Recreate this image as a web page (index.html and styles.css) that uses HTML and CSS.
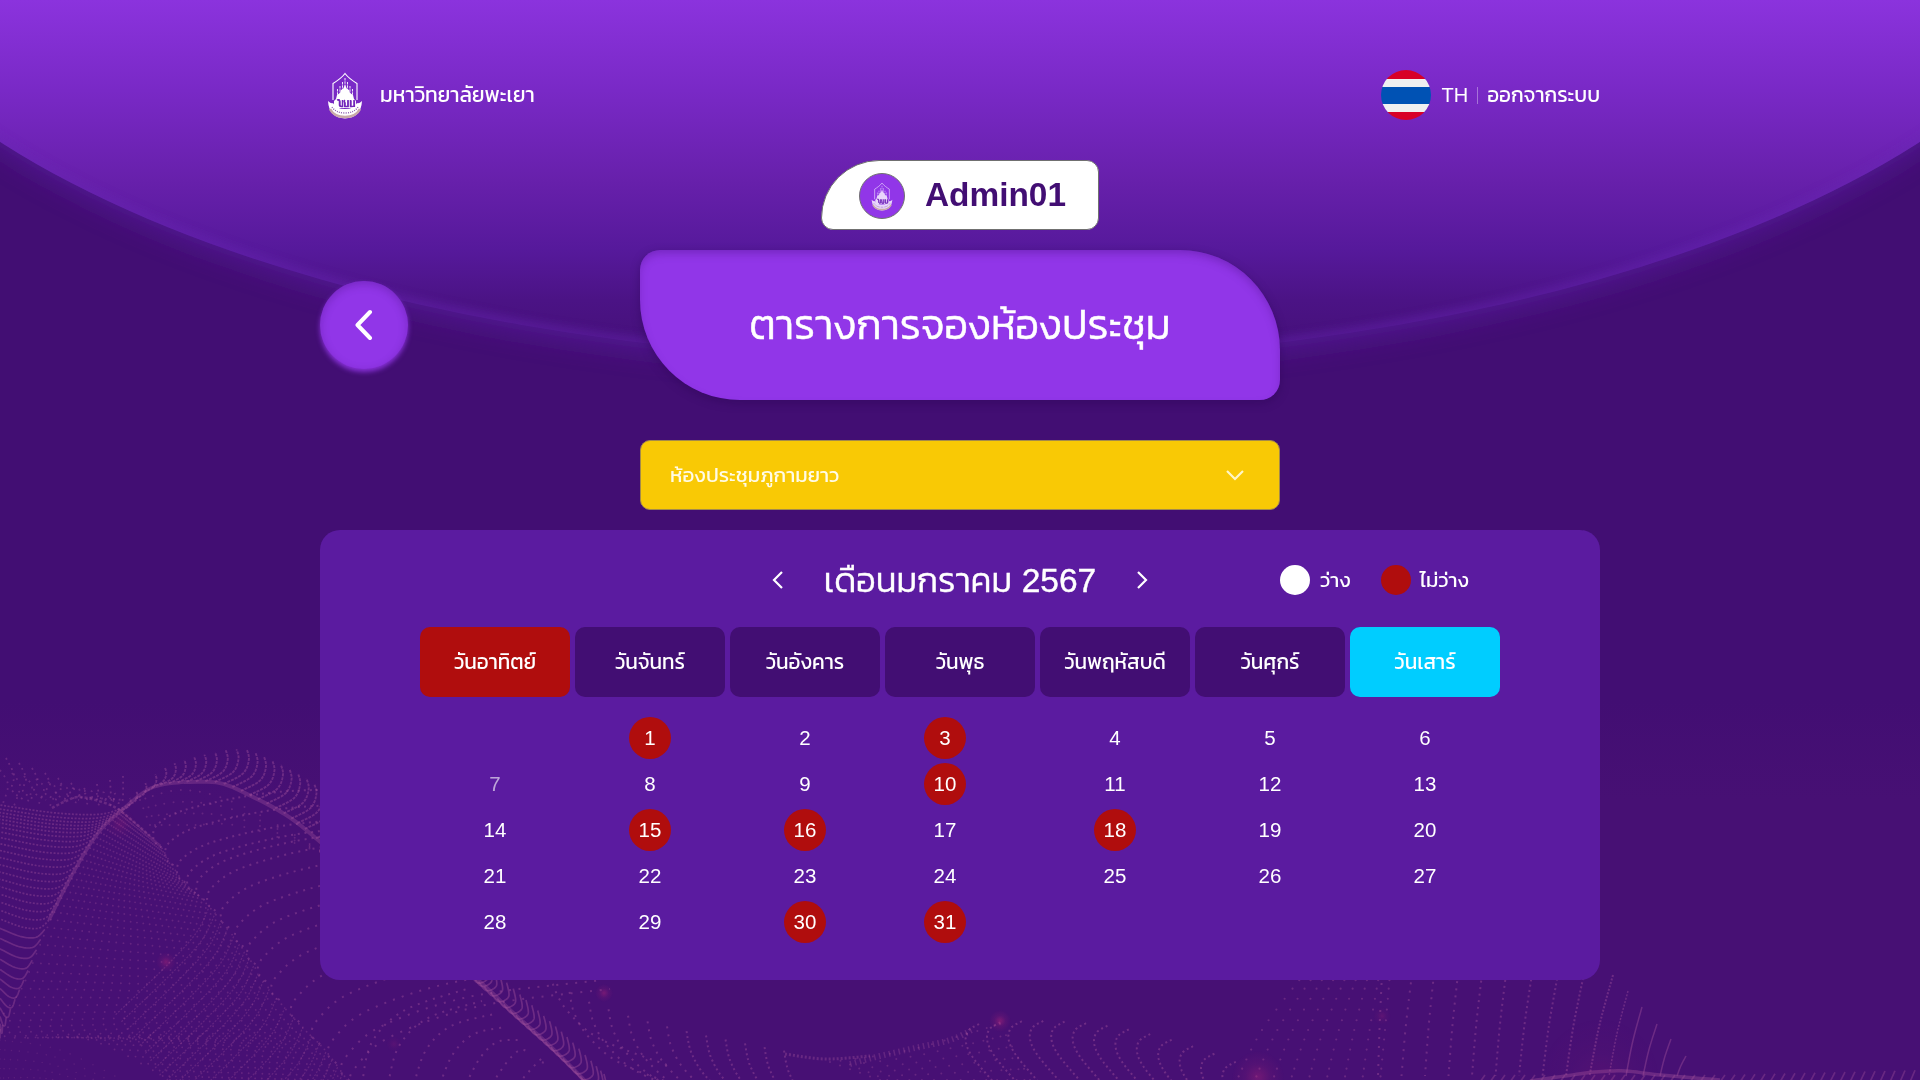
FILE: index.html
```html
<!DOCTYPE html>
<html lang="th">
<head>
<meta charset="utf-8">
<title>ตารางการจองห้องประชุม</title>
<link rel="stylesheet" href="styles.css">
</head>
<body>
<canvas class="waves" width="1920" height="360"></canvas>
<svg class="dome" width="1920" height="440" viewBox="0 0 1920 440">
  <defs>
    <linearGradient id="domeFill" gradientUnits="userSpaceOnUse" x1="0" y1="0" x2="0" y2="362">
      <stop offset="0" stop-color="#8b33dd"/><stop offset=".25" stop-color="#7929c6"/><stop offset=".5" stop-color="#6720ab"/>
      <stop offset=".69" stop-color="#56199b"/><stop offset=".83" stop-color="#4b1385"/><stop offset="1" stop-color="#430f76"/>
    </linearGradient>
    <filter id="soft" filterUnits="userSpaceOnUse" x="-100" y="-100" width="2120" height="600"><feGaussianBlur stdDeviation="14"/></filter>
    <filter id="rim" filterUnits="userSpaceOnUse" x="-100" y="-100" width="2120" height="600"><feGaussianBlur stdDeviation="5"/></filter>
    <clipPath id="domeClip"><ellipse cx="960" cy="-128" rx="1150" ry="490"/></clipPath>
  </defs>
  <ellipse cx="960" cy="-123" rx="1150" ry="490" fill="#5a1ca3" opacity=".75" filter="url(#soft)"/>
  <ellipse cx="960" cy="-128" rx="1150" ry="490" fill="url(#domeFill)"/>
  <ellipse cx="960" cy="-128" rx="1150" ry="490" fill="none" stroke="#6a28b6" stroke-width="10" opacity=".5" filter="url(#rim)" clip-path="url(#domeClip)"/>
</svg>
<svg class="defs" width="0" height="0">
  <symbol id="crest" viewBox="0 0 36 47">
    <path d="M6 28V11.500C10 9 15 5.500 18 1.500c3 4 8 7.500 12 10V28" fill="none" stroke="currentColor" stroke-width="1.100"/>
    <path d="M18 6v12M15.500 10v10M20.500 10v10M13 14v9M23 14v9M10.500 17v9M25.500 17v9" stroke="currentColor" stroke-width=".9" stroke-dasharray="2.500 .8"/>
    <path d="M18 13l2 4 2 1 1 3 3 2 1 4 2 2v7H7v-7l2-2 1-4 3-2 1-3 2-1z" fill="currentColor"/>
    <path class="crest-mono" d="M10 28q2.500-1 2.500 1v4q0 1.500 2 1.500h1V28m2.500 0q-1.500 1 0 3v3.500h3V28m2.500 0v6.500H27V28" fill="none" stroke-width="1.500"/>
    <path d="M1 29q3 3 5 2 3 6 12 6t12-6q2 1 5-2-1 17-17 17.500Q2 46 1 29z" fill="currentColor"/>
    <path class="crest-ribbon" d="M3 37q4 8 15 8t15-8" fill="none" stroke-width="2.600"/>
    <path d="M5 35q4 6 13 6t13-6" fill="none" stroke="#8a5bb0" stroke-width="1.300" stroke-dasharray="1 1.200"/>
    <path class="crest-mono" d="M11 28.500q2-1 2 1v3.500q0 1.500 2 1.500M17.500 28.500v6h3.500v-6M24 28.500v6h3.500v-6" fill="none" stroke-width="1.200"/>
  </symbol>
</svg>
<div class="page">
  <header class="topbar">
    <div class="brand"><svg class="brand-crest"><use href="#crest"/></svg><span>มหาวิทยาลัยพะเยา</span></div>
    <div class="account">
      <span class="flag"></span><span class="lang">TH</span><span class="divider"></span><span class="logout">ออกจากระบบ</span>
    </div>
  </header>
  <div class="user"><span class="avatar"><svg><use href="#crest"/></svg></span><b>Admin01</b></div>
  <div class="hero">
    <button class="back" aria-label="back"><svg width="18" height="32" viewBox="0 0 18 32"><path d="M15 3L2.500 16 15 29" fill="none" stroke="#fff" stroke-width="4" stroke-linecap="round" stroke-linejoin="round"/></svg></button>
    <h1>ตารางการจองห้องประชุม</h1>
  </div>
  <div class="select"><span>ห้องประชุมภูกามยาว</span><svg width="20" height="12" viewBox="0 0 20 12"><path d="M2 2l8 8 8-8" fill="none" stroke="#fff6c8" stroke-width="2.200"/></svg></div>
  <section class="calendar">
    <div class="month-bar">
      <div class="month">
        <svg width="12" height="20" viewBox="0 0 12 20"><path d="M10 2l-8 8 8 8" fill="none" stroke="#fff" stroke-width="2.200"/></svg>
        <h2>เดือนมกราคม <span>2567</span></h2>
        <svg width="12" height="20" viewBox="0 0 12 20"><path d="M2 2l8 8-8 8" fill="none" stroke="#fff" stroke-width="2.200"/></svg>
      </div>
      <div class="legend"><i class="free"></i><span>ว่าง</span><i class="busy"></i><span>ไม่ว่าง</span></div>
    </div>
    <div class="week">
      <div class="sun">วันอาทิตย์</div><div>วันจันทร์</div><div>วันอังคาร</div><div>วันพุธ</div><div>วันพฤหัสบดี</div><div>วันศุกร์</div><div class="sat">วันเสาร์</div>
    </div>
    <div class="days">
      <div></div><div><b>1</b></div><div>2</div><div><b>3</b></div><div>4</div><div>5</div><div>6</div>
      <div class="dim">7</div><div>8</div><div>9</div><div><b>10</b></div><div>11</div><div>12</div><div>13</div>
      <div>14</div><div><b>15</b></div><div><b>16</b></div><div>17</div><div><b>18</b></div><div>19</div><div>20</div>
      <div>21</div><div>22</div><div>23</div><div>24</div><div>25</div><div>26</div><div>27</div>
      <div>28</div><div>29</div><div><b>30</b></div><div><b>31</b></div><div></div><div></div><div></div>
    </div>
  </section>
</div>
<script src="waves.js"></script>
</body>
</html>
```
FILE: styles.css
```css
* { box-sizing: border-box; }
body {
  margin: 0;
  height: 1080px;
  overflow: hidden;
  position: relative;
  background: linear-gradient(#420e73 0, #420e73 700px, #471074 800px, #471074 100%);
  color: #fff;
  font-family: "Liberation Sans", "Kanit", "Noto Sans", sans-serif;
}
h1, h2 { margin: 0; font-weight: 400; }
.defs { position: absolute; }
.waves { position: absolute; left: 0; top: 720px; }
.dome { position: absolute; left: 0; top: 0; }
.page {
  position: relative;
  width: 1280px;
  margin: 0 auto;
  padding-top: 70px;
  display: flex;
  flex-direction: column;
  align-items: center;
}
.topbar {
  width: 100%;
  height: 50px;
  display: flex;
  justify-content: space-between;
  align-items: center;
  font-size: 21px;
}
.topbar .brand span, .topbar .logout { padding-bottom: 2px; }
.brand { display: flex; align-items: center; gap: 17px; padding-left: 7px; }
.brand-crest { width: 36px; height: 47px; color: #fff; }
.crest-mono { stroke: #7226ba; }
.crest-ribbon { stroke: #c9a9a8; }
.account { display: flex; align-items: center; }
.logout { font-size: 20.7px; }
.flag {
  width: 50px;
  height: 50px;
  border-radius: 50%;
  background: linear-gradient(#d80027 0 9px, #f0f0f0 9px 17px, #0052b4 17px 34px, #f0f0f0 34px 42px, #d80027 42px);
}
.lang { margin-left: 10px; font-size: 20px; }
.divider { width: 1px; height: 17px; margin: 0 9px; background: rgba(255, 255, 255, .35); }
.user {
  width: 278px;
  height: 70px;
  margin-top: 40px;
  padding-left: 37px;
  display: flex;
  align-items: center;
  gap: 20px;
  background: #fff;
  border: 1px solid #707070;
  border-radius: 58px 12px 12px 12px;
  color: #420e73;
  font-size: 33.4px;
}
.avatar {
  width: 46px;
  height: 46px;
  margin-top: 2px;
  border: 1px solid #707070;
  border-radius: 50%;
  background: #9136e8;
  display: flex;
  align-items: center;
  justify-content: center;
}
.avatar svg { width: 22px; height: 29px; color: #e9d6fb; }
.avatar .crest-ribbon { stroke: #c9a0ee; }
.hero {
  width: 100%;
  margin-top: 20px;
  display: grid;
  grid-template-columns: 320px 640px 320px;
}
.back {
  width: 88px;
  height: 88px;
  margin-top: 31px;
  padding: 0;
  border: 0;
  border-radius: 50%;
  background: #9136e8;
  box-shadow: 0 3px 5px #8830d8, inset 0 3px 8px rgba(60, 10, 110, .3);
  display: flex;
  align-items: center;
  justify-content: center;
}
.hero h1 {
  height: 150px;
  padding-bottom: 2px;
  display: flex;
  align-items: center;
  justify-content: center;
  background: #9136e8;
  border-radius: 20px 100px 20px 100px;
  box-shadow: 0 3px 10px rgba(40, 5, 80, .4), inset 0 5px 10px -2px rgba(60, 10, 110, .35);
  font-size: 41.600px;
  font-weight: 300;
  -webkit-text-stroke: .5px #fff;
}
.select {
  width: 640px;
  height: 70px;
  margin-top: 40px;
  padding: 0 34px 0 29px;
  display: flex;
  align-items: center;
  justify-content: space-between;
  background: #f9c905;
  border: 1px solid #a58a4a;
  border-radius: 10px;
  color: #fffbe6;
  font-size: 20.600px;
}
.select span { padding-bottom: 2px; }
.calendar {
  width: 100%;
  height: 450px;
  margin-top: 20px;
  padding: 20px 100px;
  background: #5b1ba0;
  border-radius: 20px;
}
.month-bar { height: 60px; display: grid; grid-template-columns: 350px 380px 350px; align-items: center; }
.month { grid-column: 2; display: flex; align-items: center; justify-content: center; gap: 40px; }
.month svg { flex: none; }
.month h2 { font-size: 34.500px; font-weight: 300; -webkit-text-stroke: .4px #fff; white-space: nowrap; }
.month h2 span { font-size: 33.500px; }
.legend {
  display: flex;
  align-items: center;
  padding-left: 130px;
  font-size: 20.500px;
}
.legend span { padding-bottom: 2px; }
.legend i { width: 30px; height: 30px; border-radius: 50%; margin-right: 10px; }
.legend .free { background: #fff; }
.legend .busy { background: #b00d0d; margin-left: 30px; margin-right: 9px; }
.week { margin-top: 17px; display: grid; grid-template-columns: repeat(7, 150px); gap: 5px; }
.week div {
  height: 70px;
  padding-bottom: 2px;
  display: flex;
  align-items: center;
  justify-content: center;
  background: #420e73;
  border-radius: 10px;
  font-size: 20.700px;
}
.week .sun { background: #b00d0d; }
.week .sat { background: #00cdff; }
.days {
  margin-top: 18px;
  display: grid;
  grid-template-columns: repeat(7, 150px);
  grid-auto-rows: 46px;
  column-gap: 5px;
  font-size: 20.500px;
}
.days div { display: flex; align-items: center; justify-content: center; }
.days div:nth-child(7n + 4) { padding-right: 30px; }
.days b {
  width: 42px;
  height: 42px;
  border-radius: 50%;
  background: #b00d0d;
  display: flex;
  align-items: center;
  justify-content: center;
  font-weight: 400;
}
.days .dim { opacity: .6; }
```
FILE: waves.js
```js
const ctx = document.querySelector('.waves').getContext('2d');
ctx.translate(0, -720);

// Point on a polyline at fraction t, smoothed with Catmull-Rom.
function at(pts, t) {
  const n = pts.length - 1;
  const f = Math.min(Math.max(t, 0), 0.99999) * n;
  const i = Math.floor(f), u = f - i;
  const p = k => pts[Math.min(Math.max(k, 0), n)];
  const a = p(i - 1), b = p(i), c = p(i + 1), d = p(i + 2);
  return [0, 1].map(k => 0.5 * (2 * b[k] + (c[k] - a[k]) * u +
    (2 * a[k] - 5 * b[k] + 4 * c[k] - d[k]) * u * u +
    (3 * b[k] - a[k] - 3 * c[k] + d[k]) * u * u * u));
}
function dot(x, y, alpha, r = 1) {
  ctx.fillStyle = `rgba(164,84,156,${alpha})`;
  ctx.beginPath();
  ctx.arc(x, y, r, 0, 7);
  ctx.fill();
}
// Grid of dots spread between two curves.
function sheet(a, b, rows, cols, alpha, r) {
  for (let i = 0; i <= rows; i++) {
    for (let j = 0; j <= cols; j++) {
      const p = at(a, i / rows), q = at(b, i / rows), v = j / cols;
      dot(p[0] + (q[0] - p[0]) * v, p[1] + (q[1] - p[1]) * v, alpha, r);
    }
  }
}
function strand(pts, alpha, width = 1.3, dash = []) {
  ctx.strokeStyle = `rgba(164,84,156,${alpha * 1.2})`;
  ctx.lineWidth = width;
  ctx.setLineDash(dash);
  ctx.beginPath();
  for (let i = 0; i <= 40; i++) ctx.lineTo(...at(pts, i / 40));
  ctx.stroke();
}
function glow(x, y, r, alpha = 0.5) {
  const g = ctx.createRadialGradient(x, y, 0, x, y, r);
  g.addColorStop(0, `rgba(190,40,120,${alpha})`);
  g.addColorStop(0.5, `rgba(190,40,120,${alpha * 0.3})`);
  g.addColorStop(1, 'rgba(190,40,120,0)');
  ctx.fillStyle = g;
  ctx.fillRect(x - r, y - r, 2 * r, 2 * r);
}

const rise = [[0, 1030], [24, 980], [49, 920], [73, 873], [98, 833], [122, 810], [151, 788], [184, 782]];
const fall = [[184, 782], [220, 783], [253, 797], [286, 815], [318, 840], [400, 912], [478, 980], [510, 1010], [551, 1047], [588, 1084]];
const seam = [[122, 810], [150, 835], [180, 878], [205, 900], [240, 945], [270, 990], [320, 1045], [350, 1084]];

strand(rise.slice(2), 0.28, 3.5);
strand(fall, 0.28, 4);

// Left flank, combed towards the screen edge.
for (let i = 0; i < 32; i++) {
  const p = at(rise, i / 42);
  strand([p, [p[0] * 0.8, p[1] + 8], [p[0] * 0.45, p[1] + 7], [0, p[1] - 1]], 0.32, 1.7, i < 12 ? [] : [2, 1.6]);
}
// Tufts along the ridge.
for (let i = 0; i < 28; i++) {
  const p = at(rise.slice(5).concat(fall.slice(1, 6)), i / 27);
  const h = 12 + Math.min(i, 12) * 1.9;
  strand([p, [p[0] + h * 0.55, p[1] - h * 0.3], [p[0] + h * 0.72, p[1] - h * 0.7], [p[0] + h * 0.66, p[1] - h]], 0.34, 1.9, [3, 1]);
}
for (let i = 0; i < 22; i++) {
  const p = at([[470, 974], [510, 1010], [551, 1047], [588, 1084]], i / 21);
  strand([[p[0] + 16, p[1] - 10], [p[0] + 18, p[1] + 4], [p[0] + 8, p[1] + 9], p], 0.34, 1.7);
}
// Scatter above the first saddle.
for (let k = 0; k < 10; k++) {
  strand([[6 + k * 13, 758 + k * 5 - (k > 6 ? (k - 6) * 9 : 0)], [14 + k * 12, 775 + k * 3], [12 + k * 11, 790 + k], [24 + k * 11, 800]], 0.32, 1.8, [1.8, 4]);
  strand([[k * 12, 770 + k * 3], [8 + k * 12, 785 + k], [2 + k * 12, 806]], 0.28, 1.8, [1.8, 5]);
}
strand([[52, 808], [66, 801], [80, 797], [105, 803], [122, 812], [150, 836]], 0.3, 2.5, [3, 2]);

// Body of the first hill.
sheet([[122, 812], [98, 837], [73, 877], [49, 924], [24, 984], [0, 1034], [90, 1040], [170, 1080]],
  [[160, 845], [182, 880], [205, 902], [240, 945], [270, 990], [300, 1025], [325, 1050], [350, 1084]], 48, 28, 0.3, 0.95);
for (let i = 0; i < 24; i++) {
  const p = at(seam, 0.45 + i / 42);
  strand([p, [p[0] - 14, p[1] + 28], [p[0] - 45, p[1] + 62], [p[0] - 95, p[1] + 110]], 0.24, 1.3, [2, 1.5]);
}
sheet([[0, 1040], [60, 1050], [130, 1084]], [[0, 1078], [40, 1078], [80, 1084]], 14, 4, 0.2, 0.8);
sheet([[140, 800], [184, 790], [240, 805], [320, 850]], [[150, 825], [190, 825], [240, 826], [320, 852]], 16, 3, 0.3);

// Contour arcs between the seam and the panel.
for (let i = 0; i < 16; i++) {
  const p = at(seam, 0.16 + i * 0.056);
  strand([[p[0] + 8, p[1] + 8], p, [p[0] + 5, p[1] - 16], [p[0] + 40, p[1] - 32 - i], [p[0] + 130, p[1] - 48 - i * 2], [p[0] + 260, p[1] - 50 - i * 3]], 0.34, 2, [2, 4 + i * 0.25]);
}
for (let i = 0; i < 7; i++) {
  strand([[362 + i * 26, 1084], [372 + i * 27, 1042 + i * 4], [405 + i * 23, 1010 + i * 8], [470 + i * 12, 988 + i * 13]], 0.34, 2, [2, 6]);
}
// Valley right of the ridge.
for (let i = 0; i < 13; i++) {
  const x = 550 + i * 19.5, y = 968 + Math.sqrt(i / 13) * 86;
  strand([[x, y], [x + 5, y + 22], [x + 20, y + 46], [x + 52, y + 72], [x + 120, y + 98]], 0.34, 2, [2, i > 6 ? 3 : 6]);
}
strand([[785, 1054], [825, 1059], [870, 1056]], 0.3, 3, [2, 2]);
strand([[850, 1064], [880, 1056], [915, 1048], [950, 1040], [972, 1030]], 0.26, 6, [1.5, 3.5]);
sheet([[830, 1062], [900, 1052], [960, 1036], [1000, 1024]], [[880, 1080], [930, 1080], [990, 1080], [1030, 1080]], 14, 5, 0.32);
for (let i = 0; i < 13; i++) {
  const x = 968 + i * 21.4, y = 1029 - Math.sin(i / 4) * 8 + i * i * 0.27;
  strand([[x + 11, y - 5], [x, y + 2], [x - 2, y + 14], [x + 6, y + 30], [x + 28, y + 56]], 0.36, 2, [2, 3]);
}
// Fan at the right.
sheet([[1304, 974], [1262, 1030], [1236, 1082]], [[1390, 974], [1385, 1030], [1380, 1082]], 12, 8, 0.36, 1.1);
const feet = [[1382, 974], [1412, 974], [1434, 974], [1458, 974], [1482, 974], [1506, 974], [1532, 974], [1558, 974], [1584, 974], [1613, 975], [1628, 991], [1642, 1007], [1657, 1024], [1671, 1039], [1686, 1056]];
feet.forEach(([x, top], i) => {
  const end = i < 10 ? 1378 + i * 23.5 : 1609 + (i - 10) * 17, foot = 1076;
  strand([[x, top], [x + (end - x) * 0.58, top + (foot - top) * 0.5], [end, foot]], 0.34, i > 9 ? 1.5 : 2, i > 10 ? [] : [2, Math.max(1.5, 7 - i * 0.6)]);
});
strand([[1530, 1081], [1565, 1076], [1595, 1072], [1625, 1071], [1660, 1075], [1720, 1080]], 0.32, 3.5);
for (let i = 0; i < 44; i++) {
  strand([[1480 + i * 10, 1082], [1485 + i * 10, 1075 - Math.max(0, i - 24) * 0.25]], 0.3, 1.7);
}
glow(166, 962, 10, 0.4); glow(604, 993, 9, 0.4); glow(1000, 1021, 11, 0.45); glow(1382, 1016, 9, 0.2);
glow(1258, 1077, 26, 0.35); glow(120, 824, 16, 0.2); glow(394, 1044, 8, 0.15); glow(1600, 1078, 60, 0.1);
```
